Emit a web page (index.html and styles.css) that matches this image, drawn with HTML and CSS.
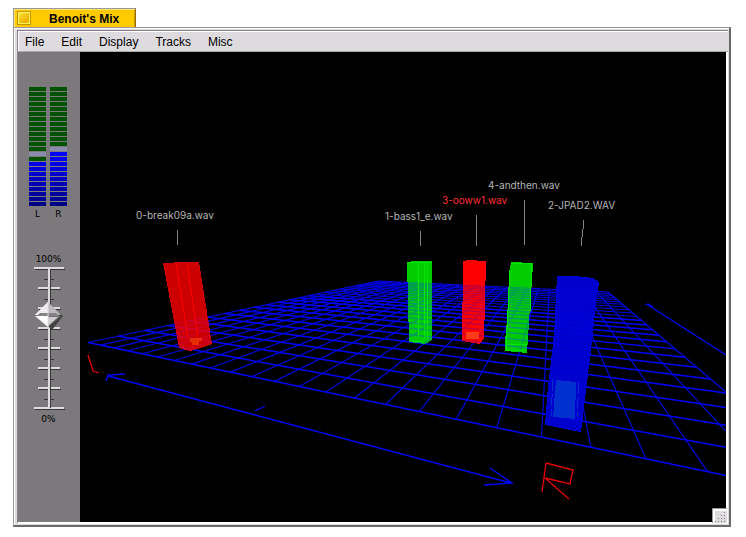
FILE: index.html
```
<!DOCTYPE html>
<html lang="en">
<head>
    <meta charset="UTF-8">
    <meta name="viewport" content="width=device-width, initial-scale=1.0">
    <title>Benoit's Mix</title>
    <link rel="stylesheet" href="styles.css">
</head>
<body>
    <div class="tab">
        <button class="close-button" aria-label="Close"></button>
        <h1 class="title">Benoit's Mix</h1>
    </div>
    <div class="window">
        <nav class="menu-bar">
            <button class="menu">File</button>
            <button class="menu">Edit</button>
            <button class="menu">Display</button>
            <button class="menu">Tracks</button>
            <button class="menu">Misc</button>
        </nav>
        <div class="content">
            <aside class="sidebar">
                <div class="meters">
                    <div class="channel">
                        <div class="meter" data-peak="13" data-level="15"></div>
                        <span class="small-text">L</span>
                    </div>
                    <div class="channel">
                        <div class="meter" data-peak="12" data-level="13"></div>
                        <span class="small-text">R</span>
                    </div>
                </div>
                <div class="fader">
                    <span class="small-text fader-max">100%</span>
                    <svg class="fader-scale" viewBox="0 0 40 168" aria-hidden="true">
                        <g id="ticks" shape-rendering="crispEdges"></g>
                    </svg>
                    <input class="fader-input" type="range" min="0" max="100" value="66" aria-label="Master volume">
                    <span class="small-text fader-min">0%</span>
                </div>
            </aside>
            <main class="stage">
                <svg class="scene" viewBox="80 52 646 470" preserveAspectRatio="xMinYMin meet">
                    <defs>
                        <clipPath id="bass-clip">
                            <path d="M408 282H432V340L425 344L409 342V322H408Z"/>
                        </clipPath>
                        <clipPath id="selected-clip">
                            <path d="M463 285H486V309H485V338L480 343L462 341V302H463Z"/>
                        </clipPath>
                        <clipPath id="andthen-clip">
                            <path d="M509 287H532L529 322L527 353L505 351V342L507 320Z"/>
                        </clipPath>
                        <clipPath id="blue-clip">
                            <path d="M557 280L596 282L591 350L581 432L545 425L554 335Z"/>
                        </clipPath>
                    </defs>
                    <g id="grid" class="grid"></g>

                    <!-- left/right axis -->
                    <g class="axis">
                        <path d="M108 376L511 483M490 468L512 483L484 485M106 381L108 375L125 374M255 411L265 406"/>
                        <path d="M645 305L648 304L653 307M648 305L726 355"/>
                    </g>
                    <g class="axis-letter">
                        <path d="M88 355L93 371L99 373"/>
                        <path d="M546 463L542 492M546 463L573 470L570 484L545 478L569 499"/>
                    </g>

                    <!-- tracks -->
                    <g class="post red-post">
                        <path class="face" d="M163 263H174V262H199L212 344L201 348L190 351L179 348Z"/>
                        <path class="edge" d="M176 263L188 338M187 263L198 338"/>
                        <path class="base" d="M190 338H202V341H199V345H192V342H190Z"/>
                    </g>
                    <g class="post green-post">
                        <path class="face" d="M407 262H411V261H432V340L425 344L409 342V322H408V282H407Z"/>
                        <use class="see-through" href="#grid" clip-path="url(#bass-clip)"/>
                        <path class="edge" d="M408 262H431M418 262V338M424 262V339M427 262V338M411 341H424"/>
                    </g>
                    <g class="post selected-post">
                        <path class="face" d="M463 261H466V260H477V261H486V281H485V320H484V338L480 344L462 341V302H463Z"/>
                        <use class="see-through" href="#grid" clip-path="url(#selected-clip)"/>
                        <path class="base" d="M466 332H479V339H466Z"/>
                    </g>
                    <g class="post green-post">
                        <path class="face" d="M511 262H522V263H533V272H532L529 322L527 353L505 351V342L507 320L509 276Z"/>
                        <use class="see-through" href="#grid" clip-path="url(#andthen-clip)"/>
                        <path class="edge" d="M511 263L532 264L530 311M510 270L506 350L524 351M507 344H526"/>
                    </g>
                    <g class="post blue-post">
                        <path class="face" d="M557 276L575 276L593 278L599 282L596 305L591 350L586 391L581 432L545 425L548 386L554 335Z"/>
                        <use class="see-through" href="#grid" clip-path="url(#blue-clip)"/>
                        <path class="base" d="M556 380L576 382L575 419L553 417Z"/>
                        <path class="base-side" d="M553 379L551 416M579 382L577 417"/>
                    </g>

                    <g class="pointer">
                        <path d="M177 230L178 245"/>
                        <path d="M420 231V246"/>
                        <path d="M476 215V246"/>
                        <path d="M524 200V245"/>
                        <path d="M584 220L583 229L581 246"/>
                    </g>
                    <g class="track-name">
                        <text x="136" y="219">0-break09a.wav</text>
                        <text x="385" y="220">1-bass1_e.wav</text>
                        <text class="selected" x="442" y="204">3-ooww1.wav</text>
                        <text x="488" y="189">4-andthen.wav</text>
                        <text x="548" y="209">2-JPAD2.WAV</text>
                    </g>
                </svg>
                <svg class="resize-corner" viewBox="0 0 15 15" aria-hidden="true">
                    <path class="corner-fill" d="M0 0H15V15H0Z"/>
                    <path class="corner-shade" d="M0 15V0H15"/>
                    <path class="corner-light" d="M2 15V2H15"/>
                    <path class="corner-dots" d="M12 4h1M9 7h1M12 7h1M6 10h1M9 10h1M12 10h1M3 13h1M6 13h1M9 13h1M12 13h1"/>
                </svg>
            </main>
        </div>
    </div>

    <script>
        const SVG = 'http://www.w3.org/2000/svg';

        function addLine(parent, x1, y1, x2, y2, className) {
            const line = document.createElementNS(SVG, 'line');
            line.setAttribute('x1', x1);
            line.setAttribute('y1', y1);
            line.setAttribute('x2', x2);
            line.setAttribute('y2', y2);
            line.setAttribute('class', className);
            parent.appendChild(line);
        }

        // Perspective projection of the floor, u = left to right, v = front to back
        function project(u, v) {
            const g = -0.6206;
            const h = 1.67;
            const w = 1 + g * u + h * v;
            const x = 88 + (856 * (1 + g) - 88) * u + (378 * (1 + h) - 88) * v;
            const y = 342.5 + (502.5 * (1 + g) - 342.5) * u + (281 * (1 + h) - 342.5) * v;
            return [x / w, y / w];
        }

        function drawGrid() {
            const grid = document.getElementById('grid');
            const cells = 24;
            for (let i = 0; i <= cells; i++) {
                const t = i / cells;
                addLine(grid, ...project(t, 0), ...project(t, 1), 'depth');
            }
            for (let i = 0; i <= cells; i++) {
                const t = i / cells;
                addLine(grid, ...project(0, t), ...project(1, t), i < 14 ? 'near' : 'far');
            }
        }

        function drawTicks() {
            const ticks = document.getElementById('ticks');
            for (let i = 0; i <= 14; i++) {
                const y = 14 + i * 10;
                if (i % 2 === 1) {
                    addLine(ticks, 15, y + 1, 25, y + 1, 'tick-dark');
                    continue;
                }
                const half = i === 0 || i === 14 ? 15 : 11;
                addLine(ticks, 21 - half, y + 1, 21 + half, y + 1, 'tick-dark');
                addLine(ticks, 20 - half, y, 20 + half, y, 'tick-light');
            }
            addLine(ticks, 21, 15, 21, 154, 'tick-dark');
            addLine(ticks, 20, 14, 20, 154, 'tick-light');
        }

        function drawMeter(meter) {
            const peak = Number(meter.dataset.peak);
            const level = Number(meter.dataset.level);
            for (let i = 0; i < 24; i++) {
                const bar = document.createElement('div');
                bar.className = 'bar';
                if (i === peak) {
                    bar.classList.add('bar-peak');
                } else if (i >= level) {
                    bar.style.backgroundColor = 'rgb(0, 0, ' + Math.min(255, 255 - (i - 13) * 12) + ')';
                }
                meter.appendChild(bar);
            }
        }

        drawGrid();
        drawTicks();
        document.querySelectorAll('.meter').forEach(drawMeter);
    </script>
</body>
</html>
```
FILE: styles.css
```
* {
    box-sizing: border-box;
}

body {
    font-family: "Liberation Sans", Arial, sans-serif;
    background-color: white;
    display: flex;
    flex-direction: column;
    align-items: flex-start;
    height: 100vh;
    margin: 0;
    padding: 8px 15px 10px 13px;
}

button {
    font: inherit;
    color: black;
    border: none;
    background: none;
    padding: 0;
}

.tab {
    display: flex;
    align-items: center;
    gap: 18px;
    height: 19px;
    padding: 0 16px 0 3px;
    background-color: #ffcb00;
    border-top: 1px solid #999;
    border-left: 1px solid #999;
    border-right: 1px solid #966d00;
    box-shadow: inset 1px 1px #ffe36b, inset -1px 0 #c99500;
}

.close-button {
    width: 14px;
    height: 14px;
    border: 1px solid #c99500;
    box-shadow: inset 1px 1px #fff35a, inset -1px -1px #fff35a;
    background: linear-gradient(135deg, #ffeb42, #f0ae00 75%, #ffd321);
}

.title {
    margin: 0;
    padding-top: 1px;
    font-size: 12px;
    line-height: 18px;
}

.window {
    display: flex;
    flex-direction: column;
    flex: 1;
    min-height: 0;
    width: 100%;
    padding: 2px 1px 1px 3px;
    background-color: #dedbde;
    border-style: solid;
    border-width: 1px 2px 2px 1px;
    border-color: #999 #6b696b #6b696b #999;
    box-shadow: inset 1px 1px white;
}

.menu-bar {
    display: flex;
    align-items: flex-start;
    gap: 17px;
    height: 22px;
    flex: none;
    padding: 1px 7px 0;
    background-color: #dedbde;
    border: 1px solid #848284;
    border-right: none;
    border-bottom-color: #aaa;
    box-shadow: inset 1px 1px white;
}

.menu {
    font-size: 12px;
    line-height: 20px;
}

.content {
    display: flex;
    flex: 1;
    min-height: 0;
    border-left: 1px solid #848284;
    border-bottom: 2px solid white;
    border-right: 2px solid white;
}

.sidebar {
    flex: none;
    width: 62px;
    padding-top: 35px;
    background-color: #7b797b;
}

.meters {
    display: flex;
    justify-content: center;
    gap: 4px;
    padding-right: 2px;
}

.channel {
    width: 17px;
    text-align: center;
}

.meter {
    display: grid;
    gap: 1px;
    margin-bottom: 3px;
}

.bar {
    height: 4px;
    background-color: #005100;
}

.bar-peak {
    background-color: #8c8aad;
}

.small-text {
    display: block;
    font-family: "DejaVu Sans", sans-serif;
    font-size: 9px;
    line-height: 10px;
}

.fader {
    display: grid;
    justify-items: center;
    height: 170px;
    margin-top: 35px;
    padding-right: 1px;
}

.fader > * {
    grid-area: 1 / 1;
}

.fader-min {
    align-self: end;
}

.fader-scale {
    width: 40px;
    height: 168px;
}

.tick-light {
    stroke: #dedbde;
    stroke-width: 2;
}

.tick-dark {
    stroke: #393839;
    stroke-width: 1;
}

.fader-input {
    appearance: none;
    writing-mode: vertical-lr;
    direction: rtl;
    width: 28px;
    height: 168px;
    margin: 0;
    background: none;
}

.fader-input::-webkit-slider-thumb {
    appearance: none;
    width: 28px;
    height: 28px;
    background: url("data:image/svg+xml,%3Csvg xmlns='http://www.w3.org/2000/svg' viewBox='0 0 28 28'%3E%3Cpath d='M16 4L28 14L17 28L9 20Z' fill='%23424142'/%3E%3Cpath d='M13 0L0 13L6 12Z' fill='%23f7f3f7'/%3E%3Cpath d='M13 0L0 13H13Z' fill='%23efebef'/%3E%3Cpath d='M13 0L26 13H13Z' fill='%23bdbabd'/%3E%3Cpath d='M0 14H13V25Z' fill='%23fff'/%3E%3Cpath d='M26 14H13V25Z' fill='%23737173'/%3E%3Cpath d='M13 15H23L13 24Z' fill='%23ceCBce'/%3E%3Cpath d='M5 11H21L24 14H2Z' fill='%23848284'/%3E%3Cpath d='M13 0V25' stroke='%23dedbde'/%3E%3C/svg%3E");
}

.stage {
    position: relative;
    flex: 1;
    min-width: 0;
    background-color: black;
}

.scene {
    display: block;
    width: 100%;
    height: 100%;
    fill: none;
    shape-rendering: crispEdges;
}

.grid,
.axis,
.axis-letter {
    shape-rendering: auto;
}

.near {
    stroke: #00f;
    stroke-width: 1.5;
}

.far {
    stroke: #0000e6;
    stroke-width: 1;
}

.depth {
    stroke: #0000de;
    stroke-width: 1.2;
}

.axis {
    stroke: #00f;
    stroke-width: 1.3;
}

.axis-letter {
    stroke: #e60000;
    stroke-width: 1.3;
}

.red-post .face,
.green-post .face {
    fill-opacity: 0.8;
}

.red-post .face,
.selected-post .face {
    fill: red;
}

.green-post .face {
    fill: lime;
}

.blue-post .face {
    fill: #0000ce;
}

.red-post .edge {
    stroke: #f00;
}

.green-post .edge {
    stroke: #00e800;
}

.red-post .base {
    fill: #ff5900;
    fill-opacity: 0.5;
}

.selected-post .base {
    fill: #ff3c18;
}

.blue-post .base {
    fill: #0030ce;
}

.base-side {
    stroke: #0030ce;
    stroke-dasharray: 12 3;
}

.see-through {
    opacity: 0.25;
}

.pointer {
    stroke: #848484;
}

.track-name {
    font-family: Inter, sans-serif;
    font-size: 10px;
    fill: #b5b5b5;
}

.track-name .selected {
    fill: #ff3030;
}

.resize-corner {
    position: absolute;
    right: -1px;
    bottom: -1px;
    width: 15px;
    height: 15px;
    fill: none;
    shape-rendering: crispEdges;
}

.corner-fill {
    fill: #dedbde;
}

.corner-shade {
    stroke: #999;
    stroke-width: 2;
}

.corner-light {
    stroke: white;
    stroke-width: 2;
}

.corner-dots {
    stroke: #848284;
    stroke-width: 1;
}
```
